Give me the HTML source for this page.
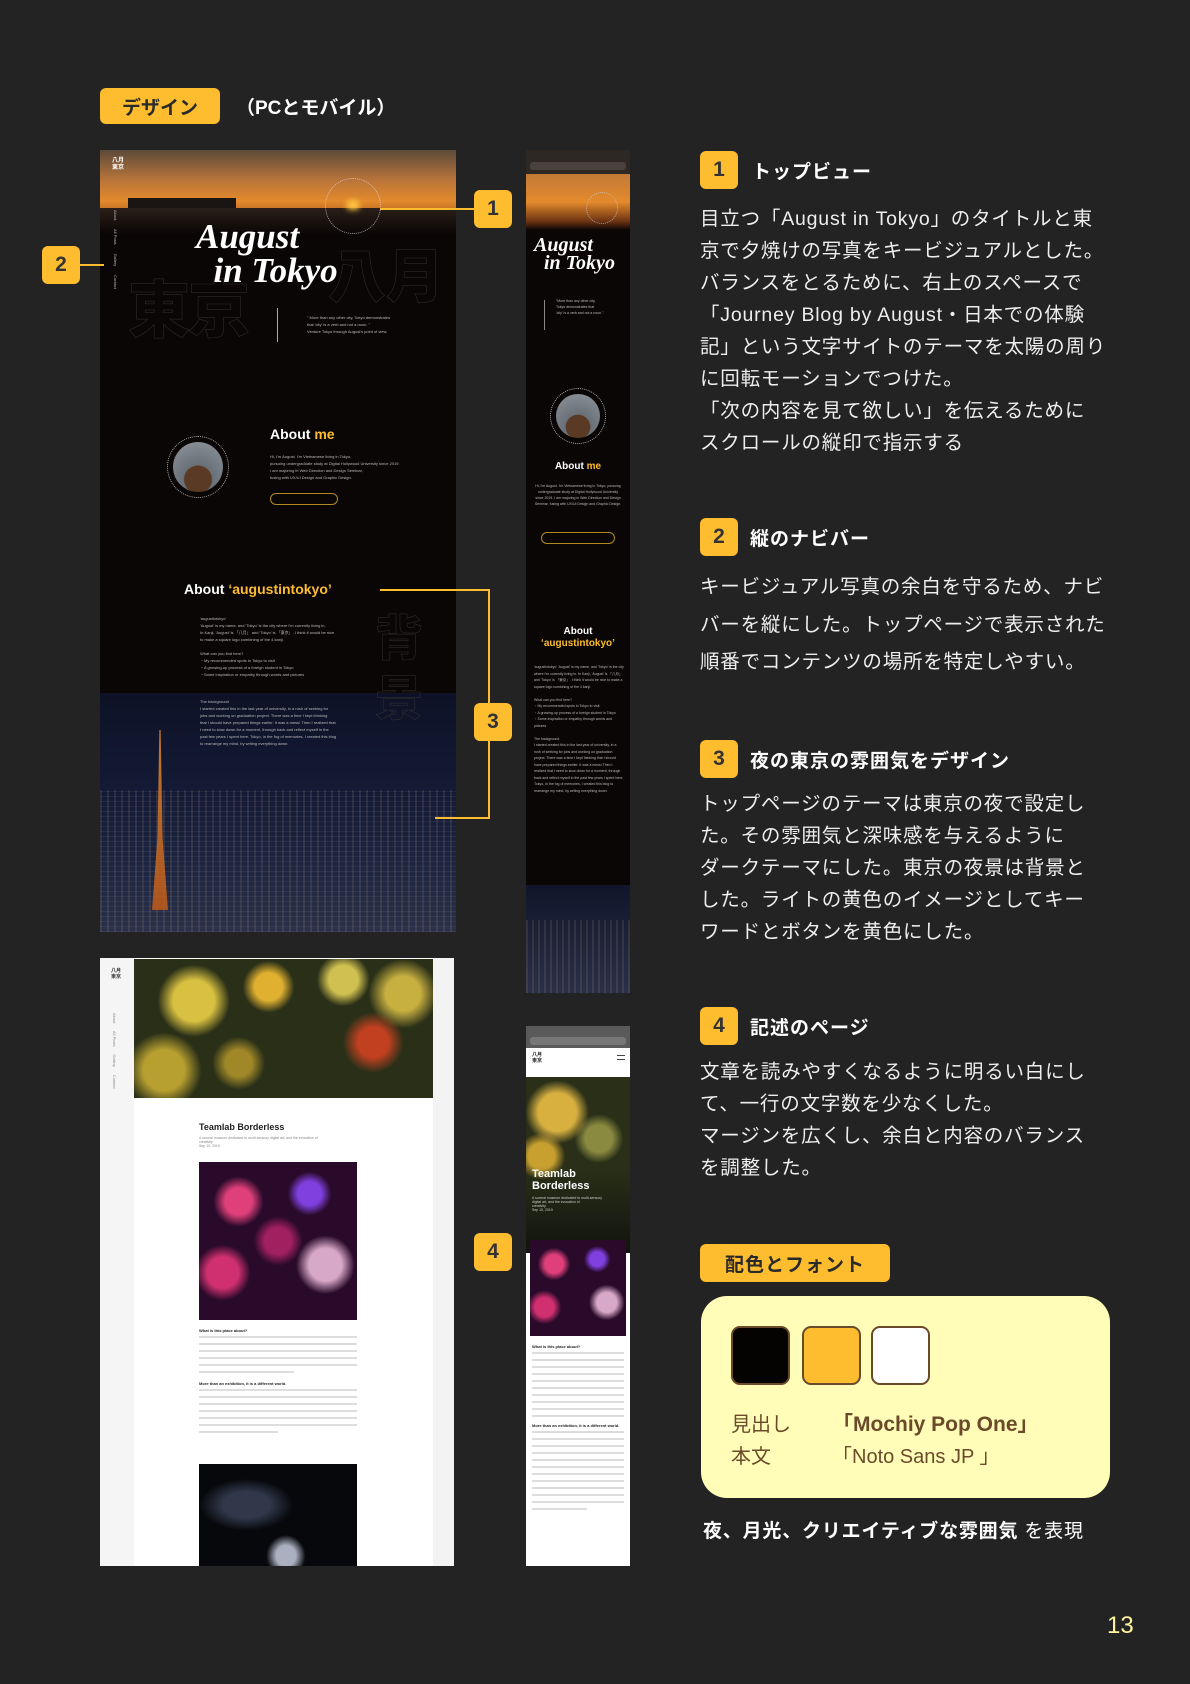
<!DOCTYPE html>
<html><head><meta charset="utf-8"><style>
*{margin:0;padding:0;box-sizing:border-box}
body{width:1190px;height:1684px;background:#232323;position:relative;overflow:hidden;font-family:"Liberation Sans","Noto Sans CJK JP",sans-serif;color:#eee}
.a{position:absolute}
.tag{background:#fdbd2e;color:#2a2a2a;font-weight:700;border-radius:6px;display:flex;align-items:center;justify-content:center}
.badge{background:#fdbd2e;color:#333;font-weight:700;border-radius:6px;width:38px;height:38px;display:flex;align-items:center;justify-content:center;font-size:21px}
.h{font-size:19px;font-weight:700;color:#fff;letter-spacing:1px}
.p{font-size:19.5px;line-height:32px;color:#eee;letter-spacing:0.8px;white-space:nowrap}
.ln{background:#fdbd2e}
.tx{font-size:4px;line-height:7px;color:#bbb;white-space:nowrap}
.gl{height:2px;background:#bbb;opacity:.5;margin:0 0 5px}
</style></head><body>

<div class="a tag" style="left:100px;top:88px;width:120px;height:36px;font-size:19px">デザイン</div>
<div class="a" style="left:236px;top:93px;font-size:19px;font-weight:700;color:#fff">（PCとモバイル）</div>

<!-- PC 1 -->
<div class="a" style="left:100px;top:150px;width:356px;height:782px;background:#0a0605;overflow:hidden">
 <div class="a" style="left:0;top:0;width:356px;height:85px;background:linear-gradient(180deg,#5c4a3a 0%,#b8743a 35%,#e38a2c 60%,#9a4a1a 85%,#0a0605 100%)"></div>
 <div class="a" style="left:28px;top:48px;width:108px;height:32px;background:#1a1512"></div>
 <div class="a" style="left:0;top:58px;width:356px;height:27px;background:linear-gradient(180deg,#2a1f18,#0a0605)"></div>
 <div class="a" style="left:246px;top:50px;width:14px;height:10px;border-radius:50%;background:#ffc840;filter:blur(3px)"></div>
 <div class="a" style="left:225px;top:28px;width:56px;height:56px;border:1px dotted #ddd;border-radius:50%;opacity:.7"></div>
 <div class="a" style="left:12px;top:8px;font-size:6px;font-weight:700;color:#fff;line-height:7px">八月<br>東京</div>
 <div class="a" style="left:28px;top:110px;font-size:62px;font-weight:900;color:#0a0605;-webkit-text-stroke:0.5px #333;letter-spacing:-2px">東京</div>
 <div class="a" style="left:228px;top:80px;font-size:58px;font-weight:900;color:#0a0605;-webkit-text-stroke:0.5px #333">八月</div>
 <div class="a" style="left:96px;top:70px;font-family:'Liberation Serif',serif;font-style:italic;font-weight:700;font-size:35px;line-height:34px;color:#fff">August<br>&nbsp;&nbsp;in Tokyo</div>
 <div class="a" style="left:177px;top:158px;width:1px;height:34px;background:#aaa"></div>
 <div class="a tx" style="left:207px;top:164px">" More than any other city, Tokyo demonstrates<br>that 'city' is a verb and not a noun. "<br>Venture Tokyo through August's point of view.</div>
 <div class="a tx" style="left:10px;top:60px;writing-mode:vertical-rl;line-height:10px;font-size:4px">About &nbsp;&nbsp;&nbsp;&nbsp;&nbsp;&nbsp; All Posts &nbsp;&nbsp;&nbsp;&nbsp;&nbsp;&nbsp; Gallery &nbsp;&nbsp;&nbsp;&nbsp;&nbsp;&nbsp; Contact</div>
 <div class="a" style="left:67px;top:286px;width:62px;height:62px;border:1px dotted #aaa;border-radius:50%"></div>
 <div class="a" style="left:73px;top:292px;width:50px;height:50px;border-radius:50%;background:radial-gradient(circle at 50% 75%,#5a3a25 0 30%,#6a7078 32%,#90969c 100%)"></div>
 <div class="a" style="left:170px;top:276px;font-size:14px;font-weight:700;color:#fff">About <span style="color:#fdbd2e">me</span></div>
 <div class="a tx" style="left:170px;top:303px">Hi, I'm August. I'm Vietnamese living in Tokyo,<br>pursuing undergraduate study at Digital Hollywood University since 2019.<br>I am majoring in Web Direction and Design Seminar,<br>fusing with UX/UI Design and Graphic Design.</div>
 <div class="a" style="left:170px;top:343px;width:68px;height:12px;border:1px solid #b08a1e;border-radius:6px"></div>
 <div class="a" style="left:84px;top:431px;font-size:14px;font-weight:700;color:#fff">About <span style="color:#fdbd2e">‘augustintokyo’</span></div>
 <div class="a tx" style="left:100px;top:465px">'augustintokyo'<br>'August' is my name, and 'Tokyo' is the city where I'm currently living in.<br>In Kanji, 'August' is 「八月」 and 'Tokyo' is 「東京」. I think it would be nice<br>to make a square logo combining of the 4 kanji.<br><br>What can you find here?<br>・My recommended spots in Tokyo to visit<br>・A growing-up process of a foreign student in Tokyo<br>・Some inspiration or empathy through words and pictures</div>
 <div class="a" style="left:0;top:543px;width:356px;height:239px;background:linear-gradient(180deg,#0d1226 0%,#141a35 40%,#1c2440 70%,#2a3048 100%)"></div>
 <div class="a" style="left:275px;top:460px;font-size:48px;font-weight:900;color:transparent;-webkit-text-stroke:0.5px #333;line-height:60px">背<br>景</div>
 <div class="a" style="left:0;top:640px;width:356px;height:142px;background:repeating-linear-gradient(90deg,rgba(255,210,140,.1) 0 2px,transparent 2px 7px),repeating-linear-gradient(0deg,rgba(180,190,220,.08) 0 1px,transparent 1px 5px)"></div>
 <div class="a" style="left:52px;top:580px;width:16px;height:180px;background:linear-gradient(180deg,#e08a30,#c05a18);clip-path:polygon(46% 0,54% 0,66% 60%,100% 100%,0 100%,34% 60%);opacity:.85"></div>
 <div class="a tx" style="left:100px;top:548px">The background<br>I started created this in the last year of university, in a rush of seeking for<br>jobs and working on graduation project. There was a time I kept thinking<br>that I should have prepared things earlier. It was a mess! Then I realized that<br>I need to slow down for a moment, through back and reflect myself in the<br>past few years I spent here. Tokyo, in the fog of memories, I created this blog<br>to rearrange my mind, by writing everything down.</div>
</div>

<!-- Mobile 1 -->
<div class="a" style="left:526px;top:150px;width:104px;height:843px;background:#0a0605;overflow:hidden">
 <div class="a" style="left:0;top:0;width:104px;height:24px;background:#2e2824"></div>
 <div class="a" style="left:4px;top:12px;width:96px;height:8px;border-radius:3px;background:#4a423c"></div>
 <div class="a" style="left:0;top:24px;width:104px;height:56px;background:linear-gradient(180deg,#c27a38,#e48a2c 50%,#6a3212 85%,#0a0605)"></div>
 <div class="a" style="left:60px;top:42px;width:32px;height:32px;border:1px dotted #ccc;border-radius:50%;opacity:.7"></div>
 <div class="a" style="left:8px;top:86px;font-family:'Liberation Serif',serif;font-style:italic;font-weight:700;font-size:20px;line-height:18px;color:#fff">August<br>&nbsp;&nbsp;in Tokyo</div>
 <div class="a" style="left:18px;top:150px;width:1px;height:30px;background:#888"></div>
 <div class="a tx" style="left:30px;top:148px;font-size:3.5px;line-height:6px">"More than any other city,<br>Tokyo demonstrates that<br>'city' is a verb and not a noun."</div>
 <div class="a" style="left:24px;top:238px;width:56px;height:56px;border:1px dotted #aaa;border-radius:50%"></div>
 <div class="a" style="left:30px;top:244px;width:44px;height:44px;border-radius:50%;background:radial-gradient(circle at 50% 75%,#5a3a25 0 30%,#6a7078 32%,#90969c 100%)"></div>
 <div class="a" style="left:0;top:311px;width:104px;text-align:center;font-size:10px;font-weight:700;color:#fff">About <span style="color:#fdbd2e">me</span></div>
 <div class="a tx" style="left:8px;top:333px;width:88px;text-align:center;font-size:3.5px;line-height:6px;white-space:normal">Hi, I'm August. I'm Vietnamese living in Tokyo, pursuing undergraduate study at Digital Hollywood University since 2019. I am majoring in Web Direction and Design Seminar, fusing with UX/UI Design and Graphic Design.</div>
 <div class="a" style="left:15px;top:382px;width:74px;height:12px;border:1px solid #b08a1e;border-radius:6px"></div>
 <div class="a" style="left:0;top:476px;width:104px;text-align:center;font-size:10px;font-weight:700;color:#fff;line-height:12px">About<br><span style="color:#fdbd2e">‘augustintokyo’</span></div>
 <div class="a tx" style="left:8px;top:514px;width:90px;font-size:3.5px;line-height:6.5px;white-space:normal">'augustintokyo' 'August' is my name, and 'Tokyo' is the city where I'm currently living in. In Kanji, 'August' is 「八月」 and 'Tokyo' is 「東京」. I think it would be nice to make a square logo combining of the 4 kanji.<br><br>What can you find here?<br>・My recommended spots in Tokyo to visit<br>・A growing-up process of a foreign student in Tokyo<br>・Some inspiration or empathy through words and pictures<br><br>The background<br>I started created this in the last year of university, in a rush of seeking for jobs and working on graduation project. There was a time I kept thinking that I should have prepared things earlier. It was a mess! Then I realized that I need to slow down for a moment, through back and reflect myself in the past few years I spent here. Tokyo, in the fog of memories, I created this blog to rearrange my mind, by writing everything down.</div>
 <div class="a" style="left:0;top:735px;width:104px;height:108px;background:linear-gradient(180deg,#10152a,#2a3048);"></div>
 <div class="a" style="left:0;top:770px;width:104px;height:73px;background:repeating-linear-gradient(90deg,rgba(255,210,140,.1) 0 2px,transparent 2px 6px)"></div>
</div>

<!-- PC 2 -->
<div class="a" style="left:100px;top:958px;width:354px;height:608px;background:#fff;overflow:hidden">
 <div class="a" style="left:0;top:0;width:34px;height:608px;background:#f5f5f5"></div>
 <div class="a" style="left:333px;top:0;width:21px;height:608px;background:#f3f3f3"></div>
 <div class="a" style="left:11px;top:10px;font-size:5px;font-weight:700;color:#333;line-height:6px">八月<br>東京</div>
 <div class="a" style="left:11px;top:55px;writing-mode:vertical-rl;font-size:4px;color:#888;line-height:6px">About &nbsp;&nbsp;&nbsp;&nbsp;&nbsp; All Posts &nbsp;&nbsp;&nbsp;&nbsp;&nbsp; Gallery &nbsp;&nbsp;&nbsp;&nbsp;&nbsp; Contact</div>
 <div class="a" style="left:34px;top:1px;width:299px;height:139px;background:radial-gradient(circle at 20% 30%,#d8c040 0 8%,transparent 14%),radial-gradient(circle at 45% 20%,#e0b030 0 7%,transparent 13%),radial-gradient(circle at 80% 60%,#c04020 0 6%,transparent 12%),radial-gradient(circle at 10% 80%,#b8a030 0 7%,transparent 13%),radial-gradient(circle at 70% 15%,#d0c050 0 6%,transparent 11%),radial-gradient(circle at 35% 75%,#a08828 0 6%,transparent 12%),radial-gradient(circle at 90% 25%,#c8b040 0 6%,transparent 12%),#2a3018"></div>
 <div class="a" style="left:99px;top:164px;font-size:9px;font-weight:700;color:#222">Teamlab Borderless</div>
 <div class="a" style="left:99px;top:178px;font-size:3.5px;color:#888;line-height:4px">A surreal museum dedicated to multi-sensory digital art, and the evocation of<br>creativity<br>Sep 10, 2019</div>
 <div class="a" style="left:99px;top:204px;width:158px;height:158px;background:radial-gradient(circle at 25% 25%,#e0407a 0 8%,transparent 15%),radial-gradient(circle at 70% 20%,#8040e0 0 7%,transparent 13%),radial-gradient(circle at 15% 70%,#d03070 0 9%,transparent 16%),radial-gradient(circle at 80% 65%,#d8a8c8 0 10%,transparent 18%),radial-gradient(circle at 50% 50%,#a02060 0 12%,transparent 22%),#2a0a2a"></div>
 <div class="a" style="left:99px;top:370px;width:158px">
  <div style="font-size:4px;font-weight:700;color:#222;margin-bottom:3px">What is this place about?</div>
  <div class="gl"></div><div class="gl"></div><div class="gl"></div><div class="gl"></div><div class="gl"></div><div class="gl" style="width:60%"></div>
  <div style="font-size:4px;font-weight:700;color:#222;margin:8px 0 3px">More than an exhibition, it is a different world.</div>
  <div class="gl"></div><div class="gl"></div><div class="gl"></div><div class="gl"></div><div class="gl"></div><div class="gl"></div><div class="gl" style="width:50%"></div>
 </div>
 <div class="a" style="left:99px;top:506px;width:158px;height:102px;background:radial-gradient(ellipse at 55% 90%,#aab0c0 0 8%,transparent 16%),radial-gradient(ellipse at 30% 40%,#30384a 0 15%,transparent 30%),#07080c"></div>
</div>

<!-- Mobile 2 -->
<div class="a" style="left:526px;top:1026px;width:104px;height:540px;background:#fff;overflow:hidden">
 <div class="a" style="left:0;top:0;width:104px;height:22px;background:#5a5a5a"></div>
 <div class="a" style="left:4px;top:11px;width:96px;height:8px;border-radius:3px;background:#777"></div>
 <div class="a" style="left:6px;top:26px;font-size:5px;font-weight:700;color:#222;line-height:6px">八月<br>東京</div>
 <div class="a" style="left:91px;top:29px;width:8px;height:5px;border-top:1px solid #444;border-bottom:1px solid #444"></div>
 <div class="a" style="left:0;top:51px;width:104px;height:176px;background:linear-gradient(180deg,transparent 50%,rgba(10,10,10,.75)),radial-gradient(circle at 30% 20%,#d8b040 0 12%,transparent 20%),radial-gradient(circle at 15% 45%,#c8a030 0 10%,transparent 18%),radial-gradient(circle at 70% 35%,#8a8a40 0 10%,transparent 18%),#2a3018"></div>
 <div class="a" style="left:6px;top:142px;font-size:11px;font-weight:700;color:#fff;line-height:12px">Teamlab<br>Borderless</div>
 <div class="a" style="left:6px;top:170px;font-size:3.5px;color:#ccc;line-height:4px">A surreal museum dedicated to multi-sensory<br>digital art, and the evocation of<br>creativity<br>Sep 10, 2019</div>
 <div class="a" style="left:4px;top:214px;width:96px;height:96px;background:radial-gradient(circle at 25% 25%,#e0407a 0 9%,transparent 16%),radial-gradient(circle at 70% 20%,#8040e0 0 7%,transparent 13%),radial-gradient(circle at 15% 70%,#d03070 0 9%,transparent 16%),radial-gradient(circle at 80% 65%,#d8a8c8 0 10%,transparent 18%),#2a0a2a"></div>
 <div class="a" style="left:6px;top:318px;width:92px">
  <div style="font-size:4px;font-weight:700;color:#222;margin-bottom:3px">What is this place about?</div>
  <div class="gl"></div><div class="gl"></div><div class="gl"></div><div class="gl"></div><div class="gl"></div><div class="gl"></div><div class="gl"></div><div class="gl"></div><div class="gl"></div><div class="gl"></div>
  <div style="font-size:4px;font-weight:700;color:#222;margin:6px 0 3px">More than an exhibition, it is a different world.</div>
  <div class="gl"></div><div class="gl"></div><div class="gl"></div><div class="gl"></div><div class="gl"></div><div class="gl"></div><div class="gl"></div><div class="gl"></div><div class="gl"></div><div class="gl"></div><div class="gl"></div><div class="gl" style="width:60%"></div>
 </div>
</div>

<!-- labels & lines -->
<div class="a ln" style="left:380px;top:208px;width:94px;height:2px"></div>
<div class="a badge" style="left:474px;top:190px">1</div>
<div class="a ln" style="left:80px;top:264px;width:24px;height:2px"></div>
<div class="a badge" style="left:42px;top:246px">2</div>
<div class="a ln" style="left:380px;top:589px;width:110px;height:2px"></div>
<div class="a ln" style="left:488px;top:589px;width:2px;height:230px"></div>
<div class="a ln" style="left:435px;top:817px;width:55px;height:2px"></div>
<div class="a badge" style="left:474px;top:703px">3</div>
<div class="a badge" style="left:474px;top:1233px">4</div>

<!-- right column -->
<div class="a badge" style="left:700px;top:151px">1</div>
<div class="a h" style="left:752px;top:157px">トップビュー</div>
<div class="a p" style="left:700px;top:203px">目立つ「August in Tokyo」のタイトルと東<br>京で夕焼けの写真をキービジュアルとした。<br>バランスをとるために、右上のスペースで<br>「Journey Blog by August・日本での体験<br>記」という文字サイトのテーマを太陽の周り<br>に回転モーションでつけた。<br>「次の内容を見て欲しい」を伝えるために<br>スクロールの縦印で指示する</div>

<div class="a badge" style="left:700px;top:518px">2</div>
<div class="a h" style="left:750px;top:524px">縦のナビバー</div>
<div class="a p" style="left:700px;top:569px;line-height:37.5px">キービジュアル写真の余白を守るため、ナビ<br>バーを縦にした。トップページで表示された<br>順番でコンテンツの場所を特定しやすい。</div>

<div class="a badge" style="left:700px;top:740px">3</div>
<div class="a h" style="left:750px;top:746px">夜の東京の雰囲気をデザイン</div>
<div class="a p" style="left:700px;top:788px">トップページのテーマは東京の夜で設定し<br>た。その雰囲気と深味感を与えるように<br>ダークテーマにした。東京の夜景は背景と<br>した。ライトの黄色のイメージとしてキー<br>ワードとボタンを黄色にした。</div>

<div class="a badge" style="left:700px;top:1007px">4</div>
<div class="a h" style="left:750px;top:1013px">記述のページ</div>
<div class="a p" style="left:700px;top:1056px">文章を読みやすくなるように明るい白にし<br>て、一行の文字数を少なくした。<br>マージンを広くし、余白と内容のバランス<br>を調整した。</div>

<div class="a tag" style="left:700px;top:1244px;width:190px;height:38px;font-size:19px;letter-spacing:1px">配色とフォント</div>
<div class="a" style="left:701px;top:1296px;width:409px;height:202px;background:#fffdb8;border-radius:26px"></div>
<div class="a" style="left:731px;top:1326px;width:59px;height:59px;background:#050202;border:2px solid #6b4a2a;border-radius:9px"></div>
<div class="a" style="left:802px;top:1326px;width:59px;height:59px;background:#fdbd2e;border:2px solid #6b4a2a;border-radius:9px"></div>
<div class="a" style="left:871px;top:1326px;width:59px;height:59px;background:#fff;border:2px solid #6b4a2a;border-radius:9px"></div>
<div class="a" style="left:731px;top:1409px;font-size:20px;color:#6b4a2a;line-height:32px">見出し<br>本文</div>
<div class="a" style="left:832px;top:1409px;font-size:20px;color:#6b4a2a;line-height:32px;white-space:nowrap"><b style="font-size:21px">「Mochiy Pop One」</b><br>「Noto Sans JP 」</div>
<div class="a" style="left:703px;top:1516px;font-size:19px;color:#fff;letter-spacing:0.8px;white-space:nowrap"><b>夜、月光、クリエイティブな雰囲気</b> を表現</div>
<div class="a" style="left:1107px;top:1612px;font-size:24px;color:#fff4a0">13</div>
</body></html>
